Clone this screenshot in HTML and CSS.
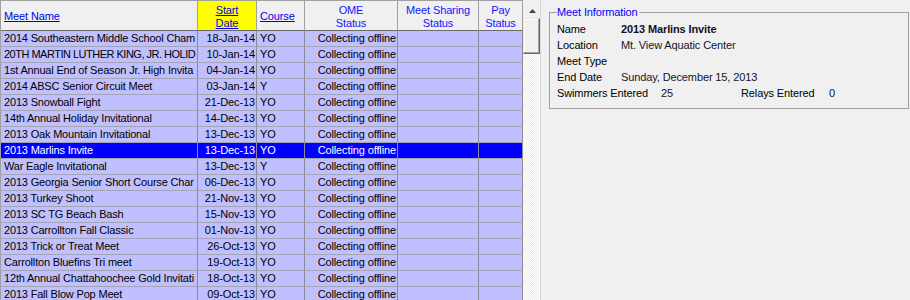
FILE: index.html
```html
<!DOCTYPE html>
<html>
<head>
<meta charset="utf-8">
<link rel="stylesheet" href="styles.css">
</head>
<body>
<div class="app">
  <section class="grid">
    <div class="row head">
      <div class="cell hc hl"><span class="lnk">Meet Name</span></div>
      <div class="cell hc yellow"><span class="lnk">Start<br>Date</span></div>
      <div class="cell hc hl"><span class="lnk">Course</span></div>
      <div class="cell hc">OME<br>Status</div>
      <div class="cell hc">Meet Sharing<br>Status</div>
      <div class="cell hc">Pay<br>Status</div>
    </div>
    <div class="row"><div class="cell nm">2014 Southeastern Middle School Cham</div><div class="cell r">18-Jan-14</div><div class="cell">YO</div><div class="cell r">Collecting offline</div><div class="cell"></div><div class="cell"></div></div>
    <div class="row"><div class="cell nm caps">20TH MARTIN LUTHER KING, JR. HOLID</div><div class="cell r">10-Jan-14</div><div class="cell">YO</div><div class="cell r">Collecting offline</div><div class="cell"></div><div class="cell"></div></div>
    <div class="row"><div class="cell nm">1st Annual End of Season Jr. High Invita</div><div class="cell r">04-Jan-14</div><div class="cell">YO</div><div class="cell r">Collecting offline</div><div class="cell"></div><div class="cell"></div></div>
    <div class="row"><div class="cell nm">2014 ABSC Senior Circuit Meet</div><div class="cell r">03-Jan-14</div><div class="cell">Y</div><div class="cell r">Collecting offline</div><div class="cell"></div><div class="cell"></div></div>
    <div class="row"><div class="cell nm">2013 Snowball Fight</div><div class="cell r">21-Dec-13</div><div class="cell">YO</div><div class="cell r">Collecting offline</div><div class="cell"></div><div class="cell"></div></div>
    <div class="row"><div class="cell nm">14th Annual Holiday Invitational</div><div class="cell r">14-Dec-13</div><div class="cell">YO</div><div class="cell r">Collecting offline</div><div class="cell"></div><div class="cell"></div></div>
    <div class="row"><div class="cell nm">2013 Oak Mountain Invitational</div><div class="cell r">13-Dec-13</div><div class="cell">YO</div><div class="cell r">Collecting offline</div><div class="cell"></div><div class="cell"></div></div>
    <div class="row sel"><div class="cell nm">2013 Marlins Invite</div><div class="cell r">13-Dec-13</div><div class="cell">YO</div><div class="cell r">Collecting offline</div><div class="cell"></div><div class="cell"></div></div>
    <div class="row"><div class="cell nm">War Eagle Invitational</div><div class="cell r">13-Dec-13</div><div class="cell">Y</div><div class="cell r">Collecting offline</div><div class="cell"></div><div class="cell"></div></div>
    <div class="row"><div class="cell nm">2013 Georgia Senior Short Course Char</div><div class="cell r">06-Dec-13</div><div class="cell">YO</div><div class="cell r">Collecting offline</div><div class="cell"></div><div class="cell"></div></div>
    <div class="row"><div class="cell nm">2013 Turkey Shoot</div><div class="cell r">21-Nov-13</div><div class="cell">YO</div><div class="cell r">Collecting offline</div><div class="cell"></div><div class="cell"></div></div>
    <div class="row"><div class="cell nm">2013 SC TG Beach Bash</div><div class="cell r">15-Nov-13</div><div class="cell">YO</div><div class="cell r">Collecting offline</div><div class="cell"></div><div class="cell"></div></div>
    <div class="row"><div class="cell nm">2013 Carrollton Fall Classic</div><div class="cell r">01-Nov-13</div><div class="cell">YO</div><div class="cell r">Collecting offline</div><div class="cell"></div><div class="cell"></div></div>
    <div class="row"><div class="cell nm">2013 Trick or Treat Meet</div><div class="cell r">26-Oct-13</div><div class="cell">YO</div><div class="cell r">Collecting offline</div><div class="cell"></div><div class="cell"></div></div>
    <div class="row"><div class="cell nm">Carrollton Bluefins Tri meet</div><div class="cell r">19-Oct-13</div><div class="cell">YO</div><div class="cell r">Collecting offline</div><div class="cell"></div><div class="cell"></div></div>
    <div class="row"><div class="cell nm">12th Annual Chattahoochee Gold Invitati</div><div class="cell r">18-Oct-13</div><div class="cell">YO</div><div class="cell r">Collecting offline</div><div class="cell"></div><div class="cell"></div></div>
    <div class="row"><div class="cell nm">2013 Fall Blow Pop Meet</div><div class="cell r">09-Oct-13</div><div class="cell">YO</div><div class="cell r">Collecting offline</div><div class="cell"></div><div class="cell"></div></div>
  </section>
  <div class="sb">
    <div class="sb-up"><svg width="7" height="4" viewBox="0 0 7 4"><polygon points="3.5,0 7,4 0,4" fill="#4a4050"/></svg></div>
    <div class="sb-thumb"></div>
    <div class="sb-track"></div>
  </div>
  <div class="info">
    <fieldset class="group">
      <legend>Meet Information</legend>
      <div class="irow"><span class="lbl">Name</span><span class="val bold">2013 Marlins Invite</span></div>
      <div class="irow"><span class="lbl">Location</span><span class="val">Mt. View Aquatic Center</span></div>
      <div class="irow"><span class="lbl">Meet Type</span><span class="val"></span></div>
      <div class="irow"><span class="lbl">End Date</span><span class="val">Sunday, December 15, 2013</span></div>
      <div class="irow"><span class="lbl wide">Swimmers Entered</span><span class="val num">25</span><span class="lbl relays">Relays Entered</span><span class="val">0</span></div>
    </fieldset>
  </div>
</div>
</body>
</html>
```

FILE: styles.css
```css
html, body {
  margin: 0;
  padding: 0;
}
body {
  background: #f0f0f0;
  font: 11px "Liberation Sans", Arial, sans-serif;
  letter-spacing: -0.12px;
  color: #000;
  width: 910px;
  height: 300px;
  overflow: hidden;
}
.app {
  display: flex;
  height: 300px;
}
.grid {
  flex: none;
  width: 523px;
  box-sizing: border-box;
  border-left: 1px solid #a0a0a0;
  background: #c0c0ff;
  overflow: hidden;
}
.row {
  display: grid;
  grid-template-columns: 197px 59px 48px 93px 81px 44px;
  height: 16px;
}
.cell {
  box-sizing: border-box;
  border-right: 1px solid #8a8a9a;
  border-bottom: 1px solid #a4a4b8;
  line-height: 15px;
  padding: 0 1px 0 3px;
  white-space: nowrap;
  overflow: hidden;
  min-width: 0;
}
.cell.nm {
  letter-spacing: -0.18px;
}
.cell.nm.caps {
  letter-spacing: -0.5px;
}
.cell.r {
  text-align: right;
  padding: 0 1px 0 0;
}
.sel {
  background: #0000ff;
  color: #fff;
}
.head {
  height: 31px;
  background: #f0f0f0;
  border-top: 1px solid #a0a0a0;
  box-sizing: border-box;
}
.head .cell {
  border-right-color: #a0a0a0;
  border-bottom: 1px solid #6a6a6a;
  line-height: 13px;
  display: flex;
  align-items: center;
  justify-content: center;
  text-align: center;
  padding: 2px 0 0 0;
  color: #1414ff;
}
.head .cell.hl {
  justify-content: flex-start;
  padding-left: 3px;
}
.head .cell.yellow {
  background: #ffff00;
}
.lnk {
  color: #0000e6;
  text-decoration: underline;
}
.sb {
  flex: none;
  width: 17px;
  border-right: 1px solid #d8d8d8;
  display: flex;
  flex-direction: column;
}
.sb-up {
  height: 18px;
  flex: none;
  display: flex;
  justify-content: center;
  align-items: flex-start;
  padding-top: 9px;
  box-sizing: border-box;
  background: #f0f0f0;
}
.sb-up svg {
  display: block;
  margin-left: 1px;
}
.sb-thumb {
  height: 36px;
  flex: none;
  box-sizing: border-box;
  background: #f0f0f0;
  border: 1px solid;
  border-color: #e3e3e3 #6a6a6a #6a6a6a #e3e3e3;
  box-shadow: inset -1px -1px 0 #a0a0a0, inset 1px 1px 0 #ffffff;
}
.sb-track {
  flex: 1;
  background: repeating-conic-gradient(#ffffff 0 25%, #ececec 0 50%) 0 0 / 2px 2px;
}
.info {
  flex: 1;
  padding: 6px 0 0 8px;
}
.group {
  margin: 0;
  width: 360px;
  height: 103px;
  box-sizing: border-box;
  border: 1px solid #a0a0a0;
  padding: 2px 0 0 7px;
}
.group legend {
  color: #0000ff;
  line-height: 13px;
  padding: 0 1px 0 0;
  margin-left: 0;
}
.irow {
  display: flex;
  height: 16px;
  line-height: 16px;
  white-space: nowrap;
}
.lbl {
  width: 64px;
  flex: none;
}
.lbl.wide {
  width: 104px;
}
.lbl.relays {
  width: 88px;
}
.val {
  color: #14142c;
}
.val.num {
  width: 80px;
}
.val.bold {
  font-weight: bold;
  color: #101020;
}
```
